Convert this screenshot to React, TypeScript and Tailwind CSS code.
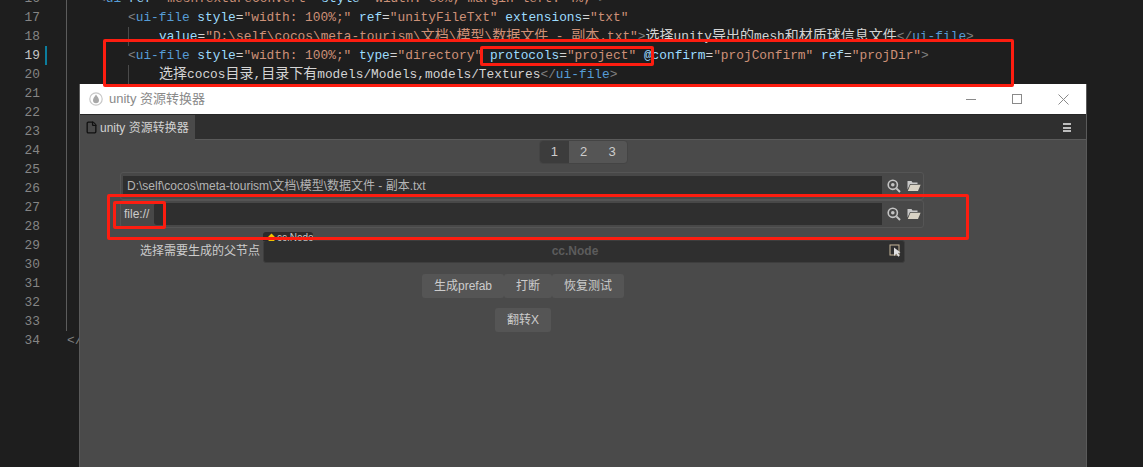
import React from 'react';
import { File } from 'lucide-react';

const Zh = ({ children }: { children: React.ReactNode }) => (
    <span className="text-[14px]">{children}</span>
);
const P = ({ children }: { children: React.ReactNode }) => <span className="text-[#808080]">{children}</span>;
const T = ({ children }: { children: React.ReactNode }) => <span className="text-[#569cd6]">{children}</span>;
const A = ({ children }: { children: React.ReactNode }) => <span className="text-[#9cdcfe]">{children}</span>;
const S = ({ children }: { children: React.ReactNode }) => <span className="text-[#ce9178]">{children}</span>;
const Eq = () => <span className="text-[#d4d4d4]">=</span>;

const Line: React.FC<{ n: number; active?: boolean; guide?: boolean; children?: React.ReactNode }> = ({
    n,
    active,
    guide = true,
    children,
}) => (
    <div className="flex h-[19px] items-center whitespace-pre">
        <div className={`w-[40px] text-right ${active ? 'text-[#c6c6c6]' : 'text-[#858585]'}`}>{n}</div>
        <div className={`ml-[5px] h-full w-[2px] ${active ? 'bg-[#0c7d9d]' : ''}`} />
        <div className={`ml-[19px] flex h-full items-center ${guide ? 'border-l border-[#5c5c5c]' : 'pl-px'}`}>
            {children}
        </div>
    </div>
);

const Nested: React.FC<{ children: React.ReactNode }> = ({ children }) => (
    <div className="ml-[61px] flex h-full items-center border-l border-[#4a4a4a] pl-[30px]">{children}</div>
);

const ZoomIcon = () => (
    <svg width="14" height="14" viewBox="0 0 14 14" fill="none">
        <circle cx="5.8" cy="5.8" r="4.6" stroke="#c4c4c4" strokeWidth="1.6" />
        <circle cx="5.8" cy="5.8" r="1.8" fill="#c4c4c4" />
        <path d="M9.4 9.4 13 13" stroke="#c4c4c4" strokeWidth="2" />
    </svg>
);

const FolderIcon = () => (
    <svg width="14" height="12" viewBox="0 0 14 12">
        <path d="M0.5 1h4l1 1.5h5V4H3L0.5 9.5Z" fill="#c9c9c9" />
        <path d="M3.4 4.8h10.2L11 11H0.8Z" fill="#d8d2c4" />
    </svg>
);

const FileRow: React.FC<{ children: React.ReactNode }> = ({ children }) => (
    <div className="ml-[40px] flex h-[28px] w-[804px] items-center rounded-[3px] border border-[#555555] bg-[#484848] pl-[2px]">
        {children}
        <div className="flex w-[41px] items-center pl-[5px] gap-[6px]">
            <ZoomIcon />
            <FolderIcon />
        </div>
    </div>
);

const Btn: React.FC<{ w: string; children: React.ReactNode }> = ({ w, children }) => (
    <button className={`h-[24px] rounded-[3px] bg-[#555555] text-[12px] text-[#cccccc] ${w}`}>{children}</button>
);

const Box: React.FC<{ className: string }> = ({ className }) => (
    <div className={`absolute rounded-[2px] border-[3px] border-[#fd1d10] ${className}`} />
);

export default function App() {
    return (
        <div className="relative h-[467px] w-[1143px] overflow-hidden bg-[#1e1e1e]">
            {/* editor behind the window */}
            <div className="-mt-[11px] font-['Liberation_Mono','Noto_Sans_CJK_SC',monospace] text-[12.83px] text-[#d4d4d4]">
                <Line n={16}>
                    <div className="pl-[31px]">
                        <P>&lt;</P><T>ui</T> <A>ref</A><Eq /><S>"meshTextureConvert"</S> <A>style</A><Eq /><S>"width: 80%; margin-left: 4%;"</S><P>&gt;</P>
                    </div>
                </Line>
                <Line n={17}>
                    <div className="pl-[61px]">
                        <P>&lt;</P><T>ui-file</T> <A>style</A><Eq /><S>"width: 100%;"</S> <A>ref</A><Eq /><S>"unityFileTxt"</S> <A>extensions</A><Eq /><S>"txt"</S>
                    </div>
                </Line>
                <Line n={18}>
                    <Nested>
                        <A>value</A><Eq /><S>"D:\self\cocos\meta-tourism\<Zh>文档</Zh>\<Zh>模型</Zh>\<Zh>数据文件</Zh> - <Zh>副本</Zh>.txt"</S><P>&gt;</P>
                        <Zh>选择</Zh>unity<Zh>导出的</Zh>mesh<Zh>和材质球信息文件</Zh><P>&lt;/</P><T>ui-file</T><P>&gt;</P>
                    </Nested>
                </Line>
                <Line n={19} active>
                    <div className="pl-[61px]">
                        <P>&lt;</P><T>ui-file</T> <A>style</A><Eq /><S>"width: 100%;"</S> <A>type</A><Eq /><S>"directory"</S> <A>protocols</A><Eq /><S>"project"</S> <A>@confirm</A><Eq /><S>"projConfirm"</S> <A>ref</A><Eq /><S>"projDir"</S><P>&gt;</P>
                    </div>
                </Line>
                <Line n={20}>
                    <Nested>
                        <Zh>选择</Zh>cocos<Zh>目录</Zh>,<Zh>目录下有</Zh>models/Models,models/Textures<P>&lt;/</P><T>ui-file</T><P>&gt;</P>
                    </Nested>
                </Line>
                {[21, 22, 23, 24, 25, 26, 27, 28, 29, 30, 31, 32, 33].map((n) => (
                    <Line key={n} n={n} />
                ))}
                <Line n={34} guide={false}>
                    <P>&lt;/</P><T>ui</T><P>&gt;</P>
                </Line>
            </div>

            {/* editor panel window */}
            <div className="absolute left-[79px] top-[84px] flex h-[383px] w-[1008px] flex-col border-x border-[#5a5a5a] bg-[#4a4a4a] font-['Liberation_Sans','Noto_Sans_CJK_SC',sans-serif]">
                <div className="flex h-[30px] items-center bg-white pl-[9px] text-[13px] text-[#8a8a8a]">
                    <svg width="14" height="14" viewBox="0 0 14 14" fill="none">
                        <circle cx="7" cy="7" r="6.2" stroke="#c8c8c8" strokeWidth="1.2" />
                        <path d="M7 2.5C8.6 5 10 6.4 10 8.3a3 3 0 0 1-6 0C4 6.4 5.4 5 7 2.5Z" fill="#a8a8a8" />
                    </svg>
                    <span className="ml-[6px]">unity 资源转换器</span>
                    <div className="ml-auto flex items-center">
                        <div className="h-px w-[10px] bg-[#8a8a8a]" />
                        <div className="ml-[36px] h-[10px] w-[10px] border border-[#8a8a8a]" />
                        <svg className="ml-[36px] mr-[17px]" width="11" height="11" viewBox="0 0 11 11">
                            <path d="M0.5 0.5 10.5 10.5M10.5 0.5 0.5 10.5" stroke="#8a8a8a" strokeWidth="1" />
                        </svg>
                    </div>
                </div>
                <div className="flex h-[26px] items-stretch border-t border-[#262626] bg-[#2f2f2f] shadow-[inset_0_-1px_0_#5a5a5a]">
                    <div className="flex w-[115px] items-center gap-[1px] bg-[#4a4a4a] pl-[5px] text-[12px] text-[#d2d2d2]">
                        <File size={13} fill="#4a4a4a" color="#101010" strokeWidth={2.4} />
                        <span className="ml-px">unity 资源转换器</span>
                    </div>
                    <div className="ml-auto mr-[15px] flex flex-col justify-center gap-[1.5px]">
                        <div className="h-[2px] w-[8px] bg-[#bdbdbd]" />
                        <div className="h-[2px] w-[8px] bg-[#bdbdbd]" />
                        <div className="h-[2px] w-[8px] bg-[#bdbdbd]" />
                    </div>
                </div>

                {/* pagination */}
                <div className="flex justify-center">
                    <div className="flex h-[24px] w-[89px] overflow-hidden rounded-[4px] border border-[#444444] bg-[#555555] text-[13px] text-[#cccccc]">
                        <div className="flex w-[30px] items-center justify-center bg-[#3c3c3c]">1</div>
                        <div className="flex w-[29px] items-center justify-center">2</div>
                        <div className="flex w-[29px] items-center justify-center">3</div>
                    </div>
                </div>

                <div className="mt-[8px]">
                    <FileRow>
                        <div className="flex h-[20px] flex-1 items-center bg-[#2f2f2f] pl-[4px] text-[12px] text-[#b4b4b4]">
                            D:\self\cocos\meta-tourism\文档\模型\数据文件 - 副本.txt
                        </div>
                    </FileRow>
                    <FileRow>
                        <div className="w-[31px] pl-px text-[12px] text-[#cccccc]">file://</div>
                        <div className="h-[22px] flex-1 rounded-l-[3px] bg-[#2f2f2f]" />
                    </FileRow>
                </div>

                <div className="ml-[40px] mt-[12px] flex h-[23px] items-center">
                    <div className="w-[140px] pb-px text-right text-[12px] text-[#cccccc]">选择需要生成的父节点</div>
                    <div className="relative ml-[3px] flex h-full w-[642px] items-center justify-center rounded-[3px] border border-[#3e3e3e] bg-[#2f2f2f] pb-[2px] pr-[18px] text-[12px] font-bold text-[#5c5c5c]">
                        cc.Node
                        <div className="absolute -top-[9px] -left-px flex h-[9px] w-[50px] items-start gap-[2px] overflow-hidden rounded-t-[3px] bg-[#2a2a2a] pl-[5px] text-[10px] leading-[11px] font-normal text-[#c8c8c8]">
                            <span className="mt-[3px] h-[7px] w-[7px] shrink-0 rotate-45 bg-[#f2c200]" />
                            cc.Node
                        </div>
                        <svg className="absolute right-[3px]" width="12" height="13" viewBox="0 0 12 13" fill="none">
                            <rect x="1" y="1" width="9" height="10" stroke="#c8b89a" strokeWidth="1" />
                            <path d="M5 3.5v8.5l2.3-2.2 2 3 1.4-1-1.8-2.8 2.6-.4Z" fill="#e0e0e0" />
                        </svg>
                    </div>
                </div>

                <div className="ml-[41px] w-[804px]">
                    <div className="mt-[11px] flex justify-center">
                        <Btn w="w-[82px]">生成prefab</Btn>
                        <Btn w="w-[48px]">打断</Btn>
                        <Btn w="w-[72px]">恢复测试</Btn>
                    </div>
                    <div className="mt-[10px] flex justify-center">
                        <Btn w="w-[56px]">翻转X</Btn>
                    </div>
                </div>
            </div>

            {/* red annotations */}
            <Box className="left-[103px] top-[39px] h-[48px] w-[911px]" />
            <Box className="left-[480px] top-[46px] h-[20px] w-[174px]" />
            <Box className="left-[107px] top-[194px] h-[46px] w-[862px]" />
            <Box className="left-[113px] top-[201px] h-[28px] w-[53px]" />
        </div>
    );
}
